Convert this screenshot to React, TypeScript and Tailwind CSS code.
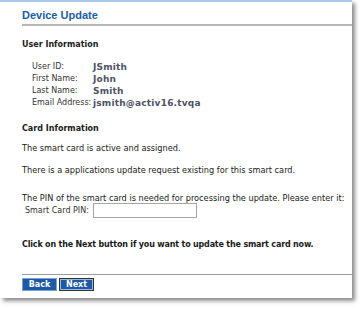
const USER_ROWS: { label: string; value: string }[] = [
    { label: "User ID:", value: "JSmith" },
    { label: "First Name:", value: "John" },
    { label: "Last Name:", value: "Smith" },
    { label: "Email Address:", value: "jsmith@activ16.tvqa" },
];

const App = () => {
    return (
        <div className="h-[309px] w-[363px] bg-white font-['DejaVu_Sans',sans-serif] text-[8.2px] leading-[10px] text-[#1a1a1a]">
            <div className="flex h-[298px] w-[352px] flex-col bg-white shadow-[3px_3px_4px_rgba(0,0,0,0.45)]">
                <div className="h-[2px] bg-[#a9c8ee]" />
                <div className="flex flex-col pl-[22px]">
                    <h1 className="mt-[7px] font-['Liberation_Sans',sans-serif] text-[11px] font-bold leading-[12px] text-[#1c5ca6]">
                        Device Update
                    </h1>
                    <div className="mt-[3px] h-[2px] bg-[#b8b8b8]" />

                    <h2 className="mt-[14px] text-[8px] font-bold">User Information</h2>
                    <div className="mt-[11px] grid grid-cols-[61px_1fr] pl-[10px]">
                        {USER_ROWS.map((row) => (
                            <div key={row.label} className="contents">
                                <span className="text-[8px] leading-[12px] text-[#333]">{row.label}</span>
                                <span className="text-[9px] font-bold leading-[12px] tracking-[0.2px] text-[#4d5266]">
                                    {row.value}
                                </span>
                            </div>
                        ))}
                    </div>

                    <h2 className="mt-[15px] text-[8px] font-bold">Card Information</h2>
                    <p className="mt-[9px]">The smart card is active and assigned.</p>
                    <p className="mt-[12px]">There is a applications update request existing for this smart card.</p>
                    <p className="mt-[18px]">
                        The PIN of the smart card is needed for processing the update. Please enter it:
                    </p>
                    <div className="flex items-center pl-[3px]">
                        <label className="w-[68px] text-[8px] text-[#333]">Smart Card PIN:</label>
                        <input
                            type="password"
                            className="h-[15px] w-[104px] border border-[#a5a5a5] bg-white outline-none"
                        />
                    </div>

                    <p className="mt-[22px] text-[8px] font-bold tracking-[-0.18px]">
                        Click on the Next button if you want to update the smart card now.
                    </p>

                    <div className="mt-[24px] h-px bg-[#9c9c9c]" />
                    <div className="mt-[3px] flex gap-[2px]">
                        <button
                            type="button"
                            className="h-[13px] w-[35px] border border-[#7a9fd0] bg-[#1c5aa6] text-[8px] font-bold leading-[11px] text-white"
                        >
                            Back
                        </button>
                        <button
                            type="button"
                            className="h-[13px] w-[35px] border border-[#333] bg-[#1c5aa6] text-[8px] font-bold leading-[11px] text-white outline outline-1 outline-offset-[-2px] outline-[#9bb8e0]"
                        >
                            Next
                        </button>
                    </div>
                </div>
            </div>
        </div>
    );
};

export default App;
